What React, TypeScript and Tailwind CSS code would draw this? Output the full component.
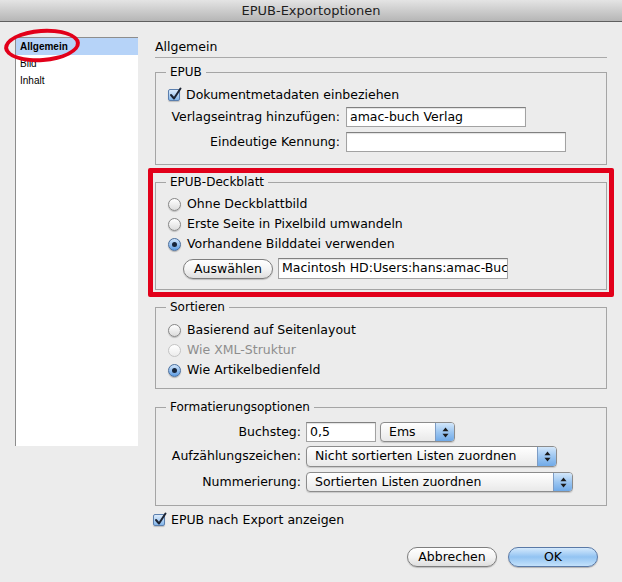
import React from 'react';

const font = "font-['DejaVu_Sans',sans-serif]";

const CheckBox: React.FC = () => (
  <span className="relative inline-block w-[12px] h-[12px] shrink-0 rounded-[2px] border border-[#5b7fae] bg-linear-to-b from-[#dcebfb] to-[#84b6ea] shadow-[0_1px_1px_rgba(0,0,0,0.2)]">
    <svg className="absolute -left-[1px] -top-[3px] overflow-visible" width="14" height="14" viewBox="0 0 14 14">
      <path d="M3 8 L6 11.5 L12.5 1.5" fill="none" stroke="#1c2433" strokeWidth="2" strokeLinecap="round" strokeLinejoin="round" />
    </svg>
  </span>
);

const Radio: React.FC<{ checked?: boolean; disabled?: boolean }> = ({ checked, disabled }) => {
  if (checked) {
    return (
      <span className="flex items-center justify-center w-[13px] h-[13px] shrink-0 rounded-full border border-[#4a6f9e] bg-linear-to-b from-[#cfe4fa] to-[#5d9ce2] shadow-[0_1px_1px_rgba(0,0,0,0.25)]">
        <span className="w-[5px] h-[5px] rounded-full bg-[#17253a]" />
      </span>
    );
  }
  return (
    <span
      className={
        disabled
          ? 'w-[13px] h-[13px] shrink-0 rounded-full border border-[#c4c4c4] bg-linear-to-b from-white to-[#ececec]'
          : 'w-[13px] h-[13px] shrink-0 rounded-full border border-[#878787] bg-linear-to-b from-white to-[#dcdcdc] shadow-[0_1px_1px_rgba(0,0,0,0.2)]'
      }
    />
  );
};

const TextField: React.FC<{ value?: string; className: string }> = ({ value, className }) => (
  <div
    className={`h-full bg-white border border-[#a2a2a2] border-t-[#808080] shadow-[inset_0_1px_1px_rgba(0,0,0,0.12)] px-[3px] flex items-center overflow-hidden whitespace-nowrap ${className}`}
  >
    {value}
  </div>
);

const Arrows: React.FC = () => (
  <svg width="7" height="11" viewBox="0 0 7 11">
    <path d="M3.5 0.5 L6.5 4.3 H0.5 Z" fill="#1a1a1a" />
    <path d="M3.5 10.5 L6.5 6.7 H0.5 Z" fill="#1a1a1a" />
  </svg>
);

const Select: React.FC<{ value: string; className: string }> = ({ value, className }) => (
  <div
    className={`h-full flex rounded-[4px] border border-[#8c8c8c] bg-linear-to-b from-white to-[#e9e9e9] shadow-[0_1px_1px_rgba(0,0,0,0.15)] ${className}`}
  >
    <span className="flex-1 flex items-center pl-[8px] whitespace-nowrap overflow-hidden">{value}</span>
    <span className="w-[19px] flex items-center justify-center rounded-r-[3px] border-l border-[#7d9cc4] bg-linear-to-b from-[#d3e7fa] via-[#9cc6f1] to-[#70aae8]">
      <Arrows />
    </span>
  </div>
);

const Group: React.FC<{ title: string; className: string; children: React.ReactNode }> = ({
  title,
  className,
  children,
}) => (
  <fieldset className={`min-w-0 border border-[#a5a5a5] px-[12px] ${className}`}>
    <legend className="-ml-[2px] px-[4px] text-[12px] leading-[15px]">{title}</legend>
    {children}
  </fieldset>
);

export default function App() {
  return (
    <div className={`relative w-[622px] h-[582px] overflow-hidden bg-[#ececec] text-[12.5px] text-black ${font}`}>
      <div className="h-[22px] flex items-center justify-center border-b border-[#5f5f5f] bg-linear-to-b from-[#e4e4e4] to-[#b6b6b6] text-[13px] text-[#1e1e1e]">
        EPUB-Exportoptionen
      </div>

      <div className="flex items-start pt-[15px]">
        <div className="ml-[15px] w-[123px] h-[409px] bg-white border-l border-t border-[#8d8d8d] font-['Liberation_Sans',sans-serif] text-[10px]">
          <div className="h-[17px] flex items-center pl-[4px] bg-[#b6d3f8] font-bold">Allgemein</div>
          <div className="h-[17px] flex items-center pl-[4px]">Bild</div>
          <div className="h-[17px] flex items-center pl-[4px]">Inhalt</div>
        </div>

        <div className="ml-[17px] w-[452px] flex flex-col">
          <div className="h-[21px] flex items-center border-b border-[#a9a9a9]">Allgemein</div>

          <Group title="EPUB" className="mt-[7px] pt-[6px] pb-[12px]">
            <div className="h-[18px] flex items-center gap-[6px]">
              <CheckBox />
              <span>Dokumentmetadaten einbeziehen</span>
            </div>
            <div className="mt-[3px] h-[20px] flex items-center gap-[6px]">
              <span className="w-[172px] text-right">Verlagseintrag hinzufügen:</span>
              <TextField value="amac-buch Verlag" className="w-[180px]" />
            </div>
            <div className="mt-[5px] h-[20px] flex items-center gap-[6px]">
              <span className="w-[172px] text-right">Eindeutige Kennung:</span>
              <TextField className="w-[220px]" />
            </div>
          </Group>

          <div className="mt-[3px] -mx-[7px] border-[5px] border-[#e2001a] rounded-[2px] p-[2px]">
            <Group title="EPUB-Deckblatt" className="pt-[4px] pb-[10px]">
              <div className="h-[20px] flex items-center gap-[6px]">
                <Radio />
                <span>Ohne Deckblattbild</span>
              </div>
              <div className="h-[20px] flex items-center gap-[6px]">
                <Radio />
                <span>Erste Seite in Pixelbild umwandeln</span>
              </div>
              <div className="h-[20px] flex items-center gap-[6px]">
                <Radio checked />
                <span>Vorhandene Bilddatei verwenden</span>
              </div>
              <div className="mt-[4px] h-[21px] flex items-center gap-[5px] pl-[15px]">
                <button className="w-[90px] h-[20px] rounded-full border border-[#7e7e7e] bg-linear-to-b from-white via-[#f4f4f4] to-[#dedede] shadow-[0_1px_1px_rgba(0,0,0,0.2)]">
                  Auswählen
                </button>
                <TextField value="Macintosh HD:Users:hans:amac-Buc" className="w-[230px]" />
              </div>
            </Group>
          </div>

          <Group title="Sortieren" className="mt-[3px] pt-[5px] pb-[8px]">
            <div className="h-[20px] flex items-center gap-[6px]">
              <Radio />
              <span>Basierend auf Seitenlayout</span>
            </div>
            <div className="h-[20px] flex items-center gap-[6px]">
              <Radio disabled />
              <span className="text-[#8e8e8e]">Wie XML-Struktur</span>
            </div>
            <div className="h-[20px] flex items-center gap-[6px]">
              <Radio checked />
              <span>Wie Artikelbedienfeld</span>
            </div>
          </Group>

          <Group title="Formatierungsoptionen" className="mt-[11px] pt-[7px] pb-[13px]">
            <div className="h-[20px] flex items-center">
              <span className="w-[133px] text-right">Buchsteg:</span>
              <TextField value="0,5" className="ml-[5px] w-[70px]" />
              <Select value="Ems" className="ml-[4px] w-[75px]" />
            </div>
            <div className="mt-[4px] h-[21px] flex items-center">
              <span className="w-[133px] text-right">Aufzählungszeichen:</span>
              <Select value="Nicht sortierten Listen zuordnen" className="ml-[5px] w-[251px]" />
            </div>
            <div className="mt-[5px] h-[20px] flex items-center">
              <span className="w-[133px] text-right">Nummerierung:</span>
              <Select value="Sortierten Listen zuordnen" className="ml-[5px] w-[267px]" />
            </div>
          </Group>

          <div className="mt-[6px] -ml-[2px] h-[16px] flex items-center gap-[6px]">
            <CheckBox />
            <span>EPUB nach Export anzeigen</span>
          </div>

          <div className="mt-[19px] h-[20px] flex justify-end gap-[11px] pr-[9px]">
            <button className="w-[90px] h-[20px] rounded-full border border-[#7e7e7e] bg-linear-to-b from-white via-[#f4f4f4] to-[#dedede] shadow-[0_1px_1px_rgba(0,0,0,0.2)]">
              Abbrechen
            </button>
            <button className="w-[90px] h-[20px] rounded-full border border-[#5a79a6] bg-linear-to-b from-[#d4e9fc] via-[#92c3f2] to-[#c4e2fb] shadow-[0_1px_1px_rgba(0,0,0,0.25)]">
              OK
            </button>
          </div>
        </div>
      </div>

      <div className="absolute left-[4px] top-[29px] w-[76px] h-[33px] rounded-[50%] border-[4px] border-[#e2001a] -rotate-[4deg]" />
    </div>
  );
}
